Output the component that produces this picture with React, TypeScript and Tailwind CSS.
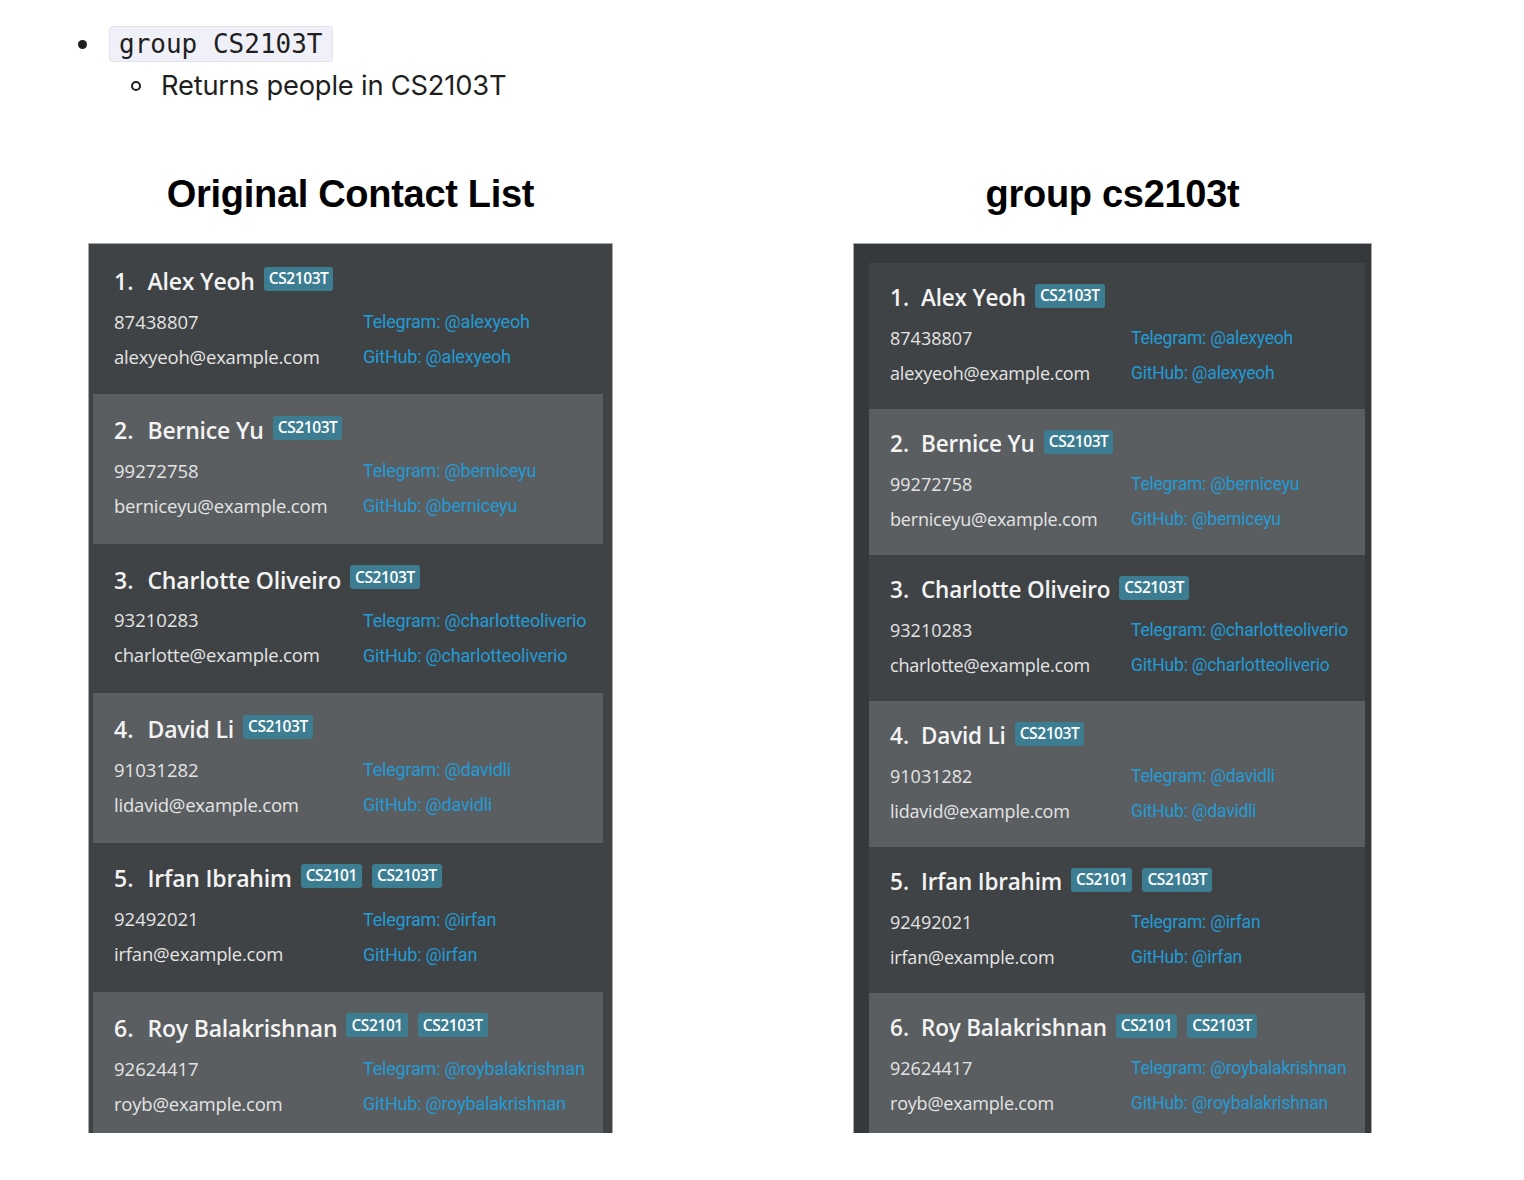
import React from "react";

type Contact = {
  name: string;
  phone: string;
  email: string;
  handle: string;
  tags: string[];
};

const CONTACTS: Contact[] = [
  { name: "Alex Yeoh", phone: "87438807", email: "alexyeoh@example.com", handle: "alexyeoh", tags: ["CS2103T"] },
  { name: "Bernice Yu", phone: "99272758", email: "berniceyu@example.com", handle: "berniceyu", tags: ["CS2103T"] },
  { name: "Charlotte Oliveiro", phone: "93210283", email: "charlotte@example.com", handle: "charlotteoliverio", tags: ["CS2103T"] },
  { name: "David Li", phone: "91031282", email: "lidavid@example.com", handle: "davidli", tags: ["CS2103T"] },
  { name: "Irfan Ibrahim", phone: "92492021", email: "irfan@example.com", handle: "irfan", tags: ["CS2101", "CS2103T"] },
  { name: "Roy Balakrishnan", phone: "92624417", email: "royb@example.com", handle: "roybalakrishnan", tags: ["CS2101", "CS2103T"] },
];

function Card({ c, i, right }: { c: Contact; i: number; right?: boolean }) {
  const bg = i % 2 === 0 ? "bg-[#3f4345]" : "bg-[#5a5e61]";
  const nameSize = right ? "text-[22.5px]" : "text-[23px]";
  const infoSize = right ? "text-[18px]" : "text-[18.5px]";
  const linkSize = right ? "text-[17.5px]" : "text-[18px]";
  return (
    <div
      className={`${bg} ${right ? "h-[146px] pt-[19px]" : "h-[149.4px] pt-[20px]"} pl-[21px] shrink-0 font-['Open_Sans',sans-serif]`}
    >
      {/* name + tags */}
      <div className="h-[32px] flex items-center">
        <span className={`${nameSize} font-semibold text-[#f3f3f3] ${right ? "mr-[12px]" : "mr-[14px]"}`}>{i + 1}.</span>
        <span className={`${nameSize} font-semibold text-[#f3f3f3] tracking-[-0.2px] mr-[9px]`}>{c.name}</span>
        {c.tags.map((t, k) => (
          <span
            key={t}
            className={`${k > 0 ? "ml-[10px]" : ""} mb-[5px] h-[24px] px-[5px] flex items-center rounded-[3px] bg-[#3d7d92] text-[15.5px] font-semibold text-white tracking-[-0.4px]`}
          >
            {t}
          </span>
        ))}
      </div>
      <div className={`mt-[7px] grid ${right ? "grid-cols-[241px_1fr]" : "grid-cols-[249px_1fr]"}`}>
        <div className={`h-[35px] flex items-center ${infoSize} font-medium text-[#e4e4e4]`}>{c.phone}</div>
        <div className={`h-[35px] flex items-center ${linkSize} text-[#229bd6] font-['Roboto',sans-serif] tracking-[-0.2px] whitespace-nowrap`}>
          Telegram: @{c.handle}
        </div>
        <div className={`h-[35px] flex items-center ${infoSize} font-medium text-[#e4e4e4] tracking-[-0.2px]`}>{c.email}</div>
        <div className={`h-[35px] flex items-center ${linkSize} text-[#229bd6] font-['Roboto',sans-serif] tracking-[-0.2px] whitespace-nowrap`}>
          GitHub: @{c.handle}
        </div>
      </div>
    </div>
  );
}

function Heading({ children }: { children: React.ReactNode }) {
  return (
    <h2 className="h-[46px] leading-[46px] text-center text-[38px] font-bold text-black font-['Liberation_Sans',Arial,sans-serif] tracking-[-0.3px]">
      {children}
    </h2>
  );
}

export default function App() {
  return (
    <div className="w-[1524px] h-[1180px] bg-white overflow-hidden">
      {/* Bullet list */}
      <div className="pt-[26px] pl-[78px] font-['Inter',sans-serif] text-[#1f1f1f]">
        <div className="flex items-center h-[36px]">
          <span className="w-[9px] h-[9px] rounded-full bg-[#1f1f1f] mr-[22px]" />
          <code className="h-[36px] px-[9px] flex items-center rounded-[4px] border border-[#e3e3f0] bg-[#eff0f8] text-[26px] text-[#1f1f1f] font-['DejaVu_Sans_Mono',monospace]">
            group CS2103T
          </code>
        </div>
        <div className="flex items-center h-[36px] mt-[6px] pl-[53px]">
          <span className="w-[10px] h-[10px] rounded-full border-[2px] border-[#1f1f1f] mr-[20px]" />
          <span className="text-[27.3px] tracking-[-0.2px]">Returns people in CS2103T</span>
        </div>
      </div>

      {/* Screenshots */}
      <div className="flex pl-[88px] gap-[240px] mt-[67px]">
        <div className="w-[525px]">
          <Heading>Original Contact List</Heading>
          <div className="mt-[26px] h-[890px] overflow-hidden border-l border-t border-r border-[#a9a9a9] bg-[#3f4345]">
            <div className="h-full flex flex-col pt-[1px] pl-[4px] pr-[9px]">
              {CONTACTS.map((c, i) => (
                <Card key={c.name} c={c} i={i} />
              ))}
            </div>
          </div>
        </div>
        <div className="w-[519px]">
          <Heading>group cs2103t</Heading>
          <div className="mt-[26px] h-[890px] overflow-hidden border-l border-t border-r border-[#a9a9a9] bg-[#36393b]">
            <div className="h-full flex flex-col pt-[19px] pl-[15px] pr-[6px]">
              {CONTACTS.map((c, i) => (
                <Card key={c.name} c={c} i={i} right />
              ))}
            </div>
          </div>
        </div>
      </div>
    </div>
  );
}
